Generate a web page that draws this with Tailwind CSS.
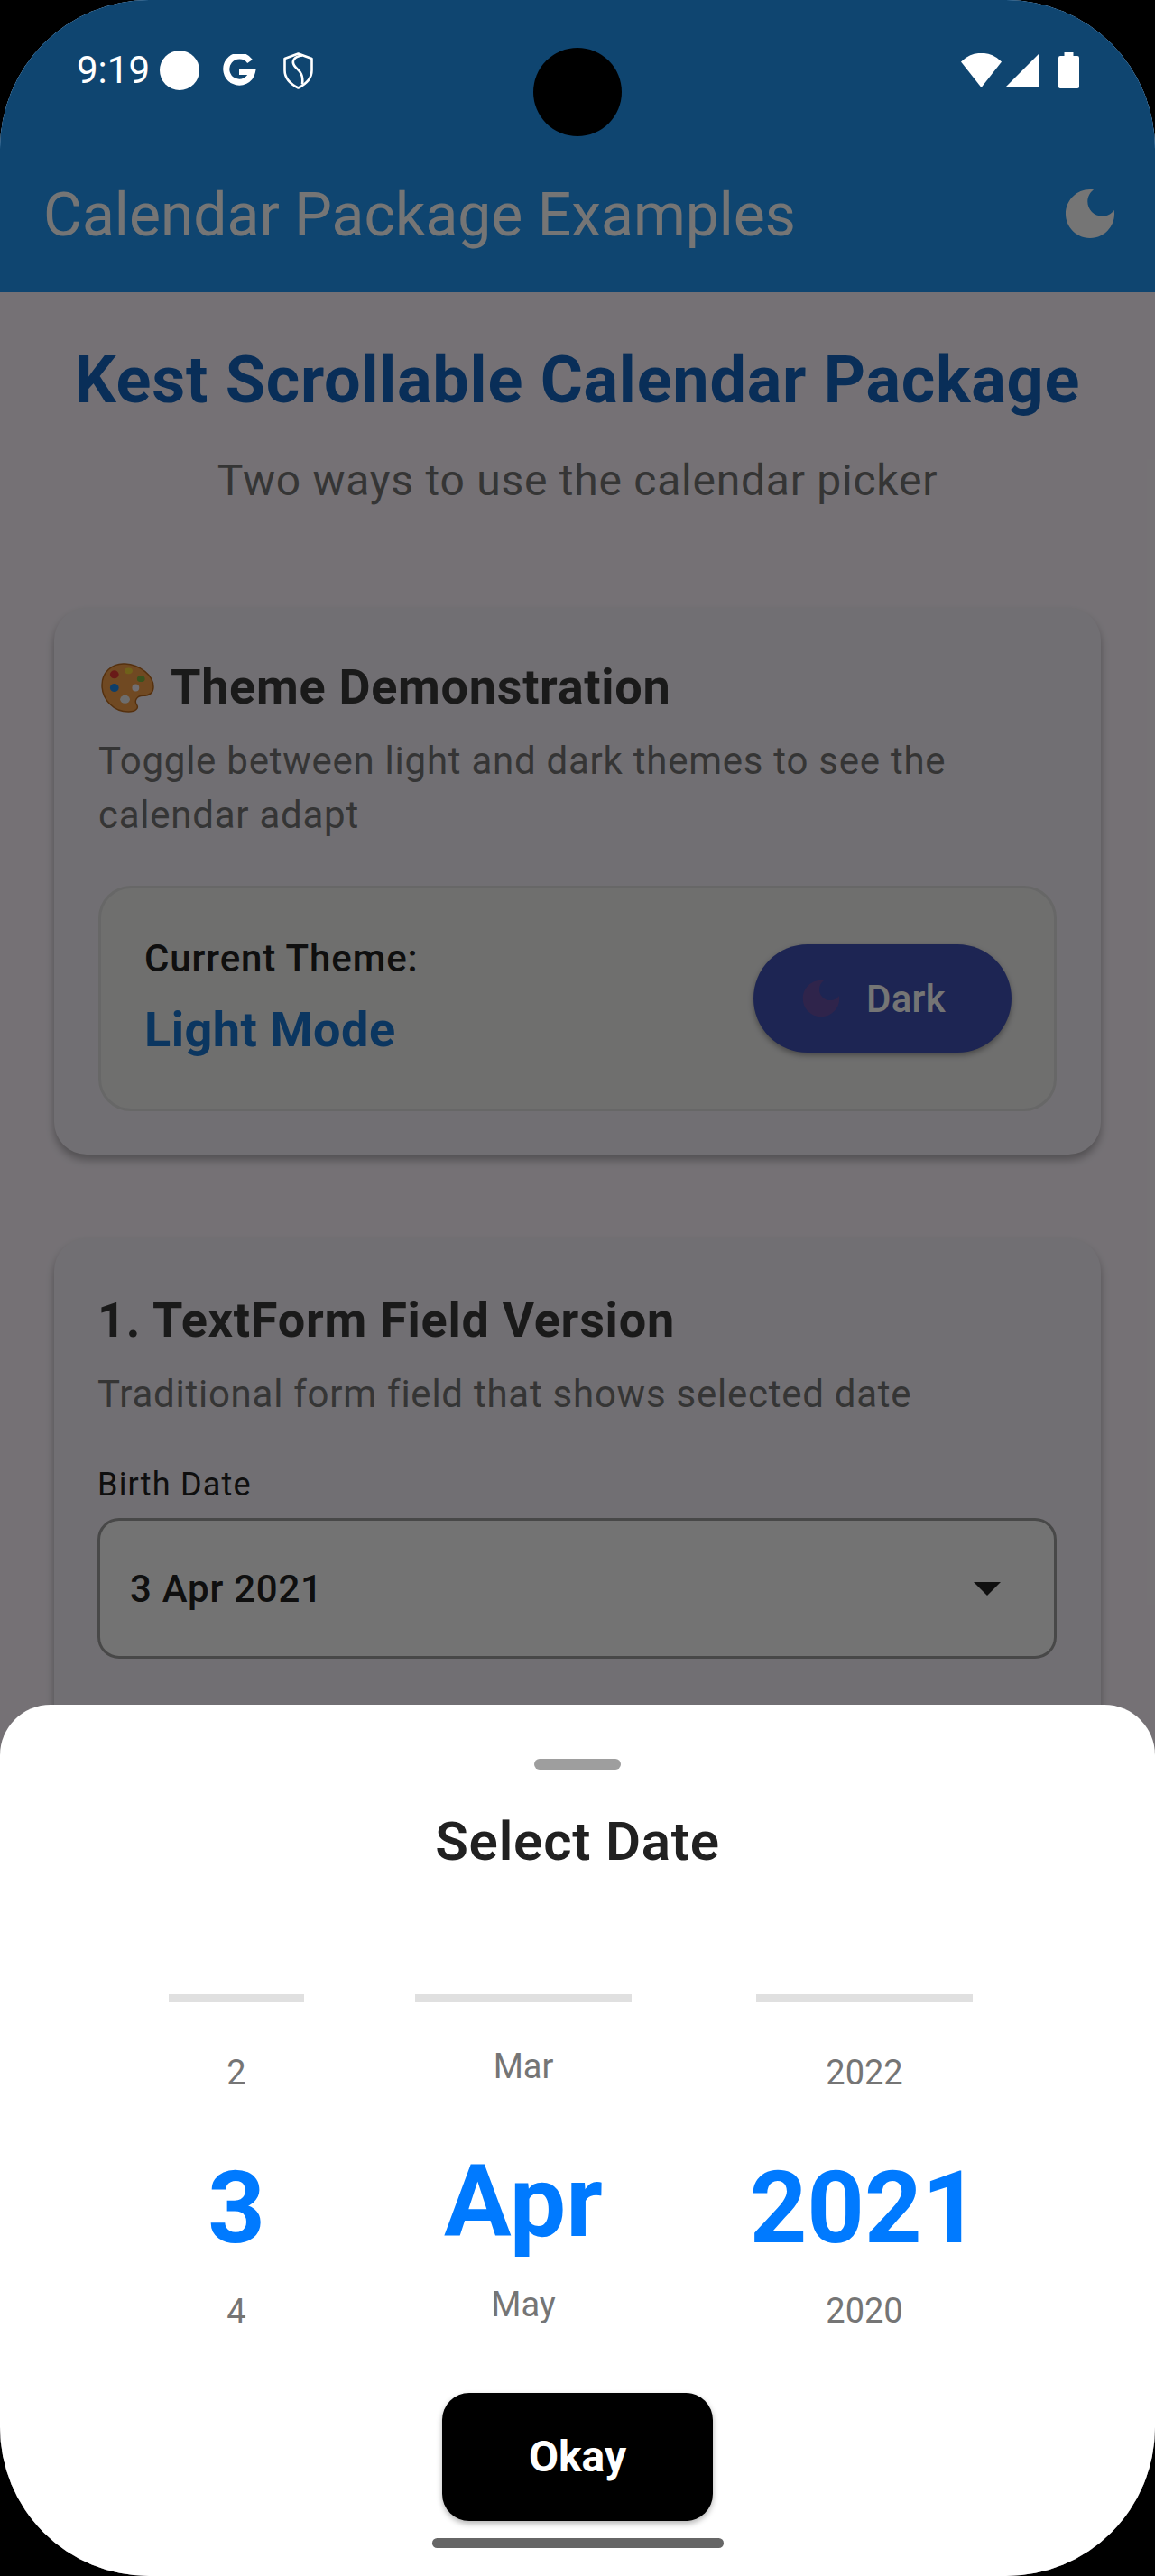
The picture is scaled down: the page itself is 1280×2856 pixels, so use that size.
<!DOCTYPE html>
<html lang="en">
<head>
  <meta charset="UTF-8">
  <title>Calendar Package Examples</title>
  <script src="https://cdn.jsdelivr.net/npm/@tailwindcss/browser@4"></script>
  <meta name="viewport" content="width=device-width, initial-scale=1.0">
</head>
<body class="bg-black font-['Roboto',sans-serif]">
  <div class="relative w-[1280px] h-[2856px] overflow-hidden rounded-[165px] bg-[#fef7ff]">

    <!-- app bar -->
    <header class="h-[324px] bg-[#2196f3] flex items-end justify-between pl-[48px] pr-[36px] pb-[46px] text-white">
      <h1 class="text-[66px] leading-[78px]">Calendar Package Examples</h1>
      <svg class="w-[72px] h-[72px] mb-[5px] fill-white" viewBox="0 0 24 24"><path d="M12 3c-4.97 0-9 4.03-9 9s4.03 9 9 9 9-4.03 9-9c0-.46-.04-.92-.1-1.36-.98 1.37-2.58 2.26-4.4 2.26-2.98 0-5.4-2.42-5.4-5.4 0-1.81.89-3.42 2.26-4.4-.44-.06-.9-.1-1.36-.1z"/></svg>
    </header>

    <main class="px-[60px]">
      <div class="text-center pt-[55px]">
        <h2 class="text-[72px] leading-[86px] font-bold tracking-[0.75px] text-[#1565c0]">Kest Scrollable Calendar Package</h2>
        <p class="mt-[36px] text-[48px] leading-[64px] tracking-[0.75px] text-[#757575]">Two ways to use the calendar picker</p>
      </div>

      <!-- theme card -->
      <section class="mt-[109px] h-[606px] rounded-[36px] bg-[#f7f2fa] shadow-[0_6px_10px_rgba(0,0,0,0.3)] px-[49px] pt-[52px]">
        <h3 class="flex items-center gap-[18px] text-[54px] leading-[72px] font-bold tracking-[0.7px] text-[#3a3a3a]">
          <svg class="ml-[3px] w-[59px] h-[55px]" viewBox="0 0 60 56">
            <path d="M27 1C12 0 1 11 1 25c0 16 13 30 30 30 8 0 12-4 9-8-3-5 1-10 7-10 7 0 12-3 12-10C59 14 44 2 27 1z" fill="#f5a04a" stroke="#b96a1f" stroke-width="1.5"/>
            <ellipse cx="15" cy="13" rx="5" ry="4.5" fill="#e53935"/>
            <ellipse cx="31" cy="9" rx="4.5" ry="3.5" fill="#f2d43a"/>
            <ellipse cx="45" cy="18" rx="4.5" ry="3.5" fill="#7cb342"/>
            <ellipse cx="15" cy="28" rx="5" ry="4.5" fill="#1e88e5"/>
            <ellipse cx="39" cy="28" rx="4" ry="4" fill="#f7f2fa"/>
            <ellipse cx="27" cy="41" rx="5.5" ry="4.5" fill="#eeeeee"/>
          </svg>
          <span>Theme Demonstration</span>
        </h3>
        <p class="mt-[16px] text-[42px] leading-[60px] tracking-[0.75px] text-[#757575]">Toggle between light and dark themes to see the calendar adapt</p>
        <div class="mt-[48px] h-[250px] rounded-[36px] border-[3px] border-[#e0e0e0] bg-[#f1f1f0] flex items-center justify-between pl-[48px] pr-[47px]">
          <div class="mb-[3px]">
            <p class="text-[42px] leading-[56px] font-medium tracking-[0.9px] text-[#212121]">Current Theme:</p>
            <p class="mt-[17px] text-[54px] leading-[68px] font-bold tracking-[0.5px] text-[#1976d2]">Light Mode</p>
          </div>
          <button class="w-[286px] h-[120px] rounded-full bg-[#3f51b5] shadow-[0_3px_6px_rgba(0,0,0,0.35)] flex items-center pl-[48px] gap-[23px] text-white text-[42px] tracking-[0.25px] font-medium">
            <svg class="w-[54px] h-[54px] fill-[#6750a4]" viewBox="0 0 24 24"><path d="M12 3c-4.97 0-9 4.03-9 9s4.03 9 9 9 9-4.03 9-9c0-.46-.04-.92-.1-1.36-.98 1.37-2.58 2.26-4.4 2.26-2.98 0-5.4-2.42-5.4-5.4 0-1.81.89-3.42 2.26-4.4-.44-.06-.9-.1-1.36-.1z"/></svg>
            <span>Dark</span>
          </button>
        </div>
      </section>

      <!-- text form field card -->
      <section class="mt-[93px] h-[700px] rounded-[36px] bg-[#f7f2fa] shadow-[0_6px_10px_rgba(0,0,0,0.3)] pl-[48px] pr-[49px] pt-[55px]">
        <h3 class="text-[54px] leading-[72px] font-bold tracking-[0.75px] text-[#3a3a3a]">1. TextForm Field Version</h3>
        <p class="mt-[16px] text-[42px] leading-[60px] tracking-[0.75px] text-[#757575]">Traditional form field that shows selected date</p>
        <p class="mt-[46px] text-[36px] leading-[48px] tracking-[1.2px] text-[#212121]">Birth Date</p>
        <div class="mt-[13px] h-[156px] rounded-[24px] border-[3px] border-[#9e9e9e] bg-[#fafafa] flex items-center justify-between pl-[33px] pr-[59px]">
          <span class="text-[42px] font-medium text-[#212121] tracking-[0.75px]">3 Apr 2021</span>
          <span class="w-0 h-0 border-x-[15px] border-x-transparent border-t-[15px] border-t-[#212121]"></span>
        </div>
      </section>
    </main>

    <!-- modal scrim -->
    <div class="absolute inset-0 bg-black/54"></div>

    <!-- status bar -->
    <div class="absolute top-[50px] inset-x-0 h-[56px] flex items-center pl-[85px] pr-[84px] text-white">
      <span class="text-[42px] leading-[56px] w-[92px]">9:19</span>
      <span class="w-[44px] h-[44px] rounded-full bg-white"></span>
      <svg class="ml-[25px] w-[38px] h-[36px]" viewBox="0 0 38 36" fill="none" stroke="white" stroke-width="7"><path d="M31 8A14.5 14.5 0 1 0 33.5 19.5H19"/></svg>
      <svg class="ml-[30px] w-[33px] h-[41px]" viewBox="0 0 33 41" fill="none" stroke="white" stroke-width="2.6" stroke-linejoin="round"><path d="M16.5 1.5 31.5 7v13c0 9-6 15-15 19.5C7.5 35 1.5 29 1.5 20V7z"/><path d="M21 3.5c-9 1-12 6-9 11s11 7 9 21"/></svg>
      <svg class="ml-auto w-[45px] h-[38px] fill-white" viewBox="0 0 45 38"><path d="M0 9.5A31 31 0 0 1 45 9.5L22.5 38z"/></svg>
      <svg class="ml-[4px] w-[38px] h-[38px] fill-white" viewBox="0 0 38 38"><path d="M38 0V38H0z"/></svg>
      <svg class="ml-[21px] w-[23px] h-[40px] fill-white" viewBox="0 0 23 40"><path d="M6.5 0h10v4H21a2 2 0 0 1 2 2v32a2 2 0 0 1-2 2H2a2 2 0 0 1-2-2V6a2 2 0 0 1 2-2h4.5z"/></svg>
    </div>
    <div class="absolute top-[53px] left-[591px] w-[98px] h-[98px] rounded-full bg-black"></div>

    <!-- bottom sheet -->
    <div class="absolute inset-x-0 bottom-0 h-[966px] bg-white rounded-t-[56px] flex flex-col items-center pt-[60px]">
      <div class="w-[96px] h-[12px] rounded-full bg-[#9e9e9e]"></div>
      <h2 class="mt-[44px] text-[60px] leading-[72px] font-semibold tracking-[0.8px] text-[#212121]">Select Date</h2>

      <div class="mt-[133px] self-start flex pl-[187px] gap-x-[123px] text-[#757575] text-[38px] leading-[48px]">
        <div class="w-[150px] flex flex-col items-center">
          <div class="w-full h-[9px] bg-[#e0e0e0]"></div>
          <span class="mt-[54px]">2</span>
          <span class="mt-[64px] text-[111px] leading-[124px] font-bold text-[#007aff]">3</span>
          <span class="mt-[29px]">4</span>
        </div>
        <div class="w-[240px] flex flex-col items-center">
          <div class="w-full h-[9px] bg-[#e0e0e0]"></div>
          <span class="mt-[47px]">Mar</span>
          <span class="mt-[64px] text-[111px] leading-[124px] font-bold text-[#007aff]">Apr</span>
          <span class="mt-[28px]">May</span>
        </div>
        <div class="ml-[15px] w-[240px] flex flex-col items-center">
          <div class="w-full h-[9px] bg-[#e0e0e0]"></div>
          <span class="mt-[54px]">2022</span>
          <span class="mt-[64px] text-[111px] leading-[124px] font-bold text-[#007aff]">2021</span>
          <span class="mt-[28px]">2020</span>
        </div>
      </div>

      <button class="absolute top-[763px] left-[490px] w-[300px] h-[142px] rounded-[30px] bg-black text-white text-[48px] font-bold shadow-[0_3px_6px_rgba(0,0,0,0.3)]">Okay</button>
      <div class="absolute top-[924px] left-[479px] w-[323px] h-[11px] rounded-full bg-[#666666]"></div>
    </div>
  </div>
</body>
</html>
